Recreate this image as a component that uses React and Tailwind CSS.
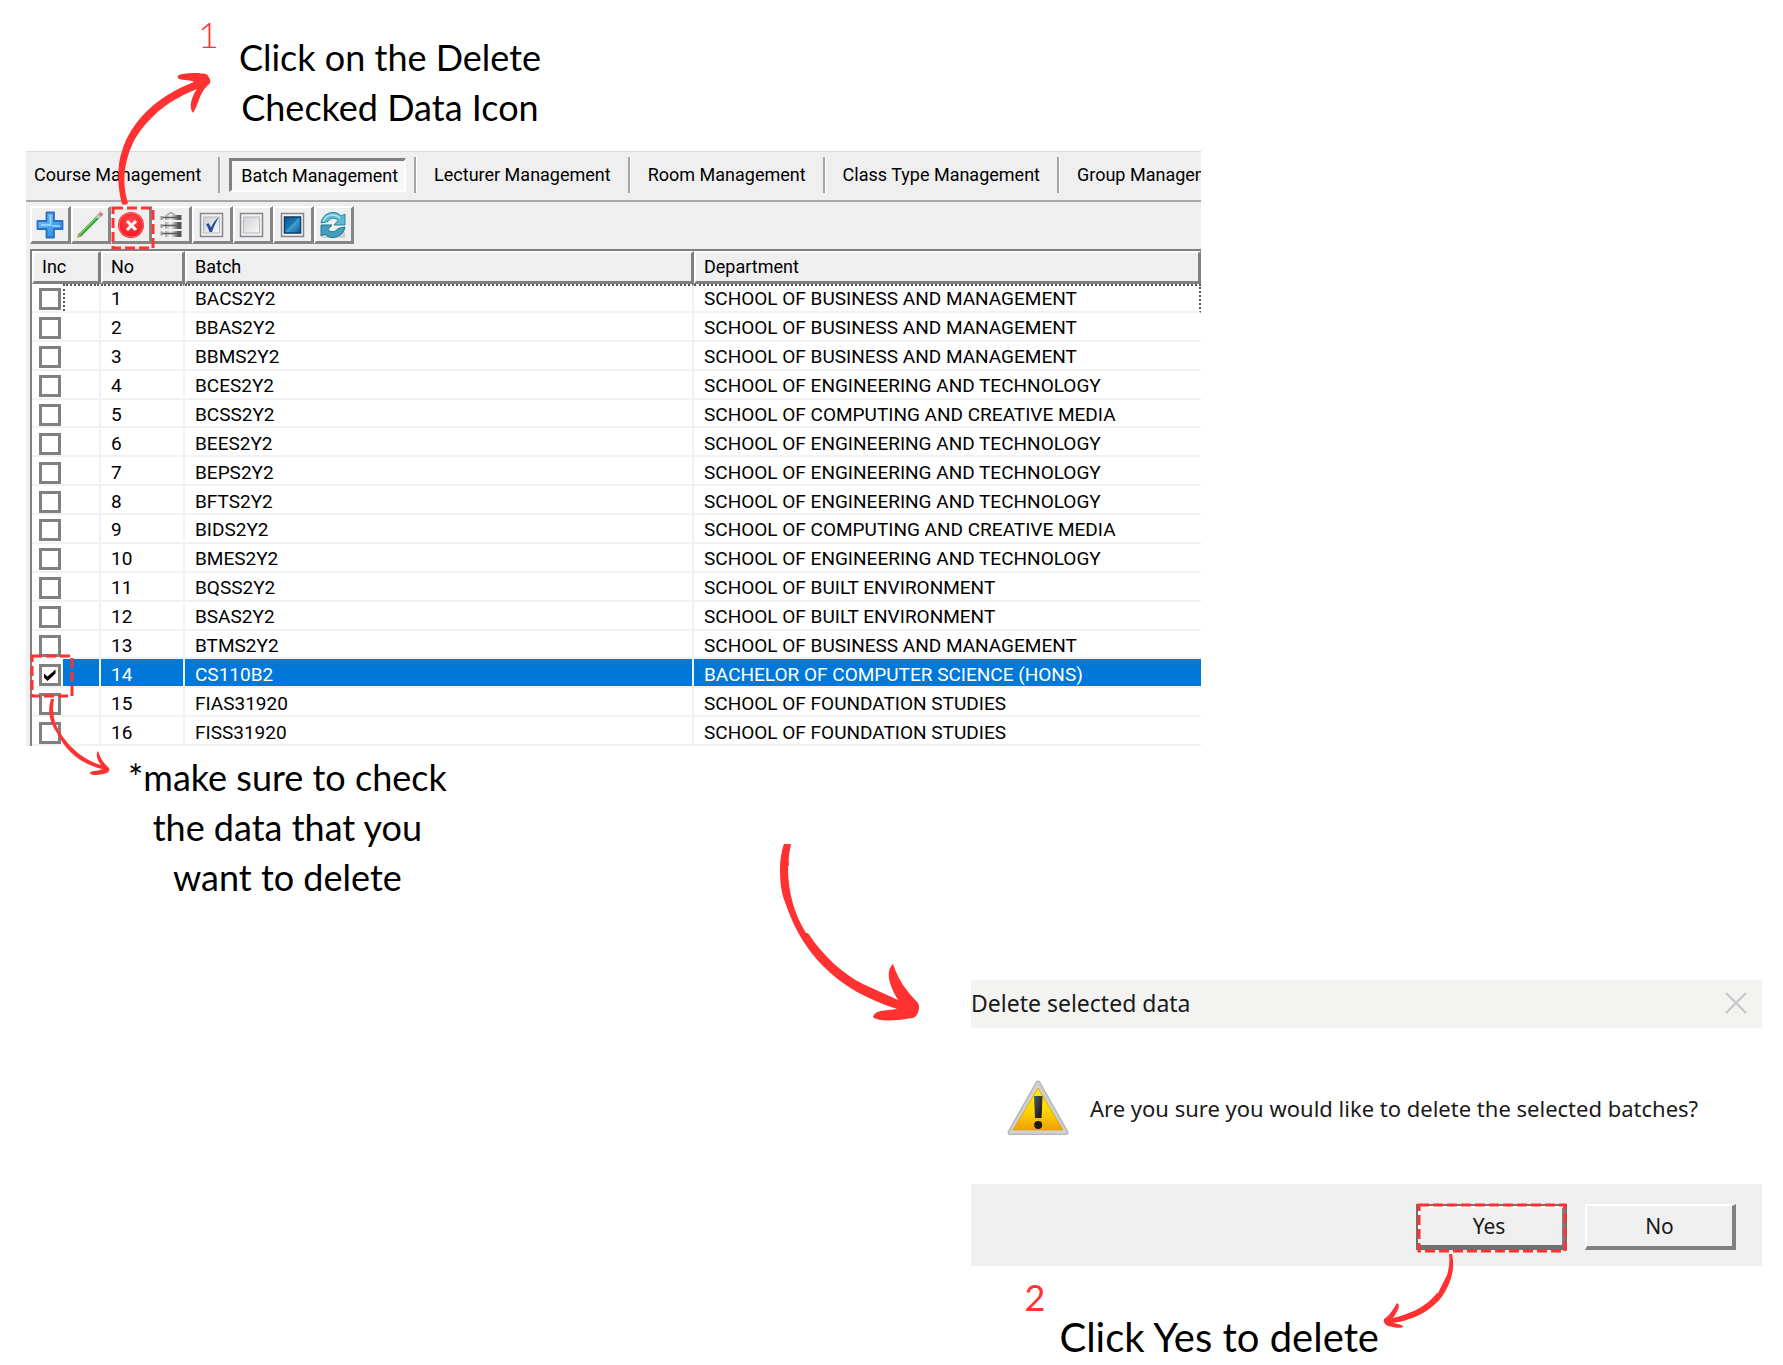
import React, { useState } from 'react';

const BUSINESS = 'SCHOOL OF BUSINESS AND MANAGEMENT';
const ENGINEERING = 'SCHOOL OF ENGINEERING AND TECHNOLOGY';
const COMPUTING = 'SCHOOL OF COMPUTING AND CREATIVE MEDIA';
const BUILT = 'SCHOOL OF BUILT ENVIRONMENT';
const FOUNDATION = 'SCHOOL OF FOUNDATION STUDIES';

const batches = [
    { no: 1, batch: 'BACS2Y2', department: BUSINESS },
    { no: 2, batch: 'BBAS2Y2', department: BUSINESS },
    { no: 3, batch: 'BBMS2Y2', department: BUSINESS },
    { no: 4, batch: 'BCES2Y2', department: ENGINEERING },
    { no: 5, batch: 'BCSS2Y2', department: COMPUTING },
    { no: 6, batch: 'BEES2Y2', department: ENGINEERING },
    { no: 7, batch: 'BEPS2Y2', department: ENGINEERING },
    { no: 8, batch: 'BFTS2Y2', department: ENGINEERING },
    { no: 9, batch: 'BIDS2Y2', department: COMPUTING },
    { no: 10, batch: 'BMES2Y2', department: ENGINEERING },
    { no: 11, batch: 'BQSS2Y2', department: BUILT },
    { no: 12, batch: 'BSAS2Y2', department: BUILT },
    { no: 13, batch: 'BTMS2Y2', department: BUSINESS },
    { no: 14, batch: 'CS110B2', department: 'BACHELOR OF COMPUTER SCIENCE (HONS)' },
    { no: 15, batch: 'FIAS31920', department: FOUNDATION },
    { no: 16, batch: 'FISS31920', department: FOUNDATION },
];

const tabs = [
    'Course Management',
    'Batch Management',
    'Lecturer Management',
    'Room Management',
    'Class Type Management',
    'Group Management',
];

const AddIcon = () => (
    <svg viewBox="0 0 28 28" className="h-7 w-7">
        <defs>
            <linearGradient id="add" x1="0" y1="0" x2="1" y2="1">
                <stop offset="0" stopColor="#7cc4fb" />
                <stop offset="1" stopColor="#1f86ea" />
            </linearGradient>
        </defs>
        <path d="M10.500 1.500h7.500v8.500h8.500v8h-8.500v8.500h-7.500v-8.500h-9v-8h9z" fill="url(#add)" stroke="#2a6fc0" strokeWidth="1.800" strokeLinejoin="round" />
        <path d="M14.500 4v10H5M16 15h8" stroke="#a9dcff" strokeWidth="1.500" fill="none" />
    </svg>
);

const EditIcon = () => (
    <svg viewBox="0 0 28 28" className="h-7 w-7">
        <path d="M3.500 24.500 23 5" stroke="#2f9a35" strokeWidth="3.500" />
        <path d="M3.500 23.500 22 5" stroke="#7fd877" strokeWidth="1.500" />
        <path d="M22.500 5.500 26 2" stroke="#c9878c" strokeWidth="4" />
        <path d="M21.500 7 23.500 4.500" stroke="#c8c8c8" strokeWidth="3.500" />
        <path d="M1 27 2.500 22.500 5.500 25.500z" fill="#b99a4a" />
    </svg>
);

const DeleteIcon = () => (
    <svg viewBox="0 0 28 28" className="h-7 w-7">
        <defs>
            <radialGradient id="del" cx=".5" cy=".35" r=".7">
                <stop offset="0" stopColor="#ff4a4a" />
                <stop offset="1" stopColor="#f0101c" />
            </radialGradient>
        </defs>
        <circle cx="14" cy="14" r="13" fill="url(#del)" />
        <circle cx="14" cy="14" r="12" fill="none" stroke="#ff6a6a" strokeWidth="1" />
        <path d="M10 10l9 9M19 10l-9 9" stroke="#fff" strokeWidth="3" />
    </svg>
);

const ServerIcon = () => (
    <svg viewBox="0 0 28 28" className="h-7 w-7">
        <defs>
            <linearGradient id="srv" x1="0" y1="0" x2="1" y2="0">
                <stop offset="0" stopColor="#a8a8a8" />
                <stop offset=".4" stopColor="#f4f4f4" />
                <stop offset="1" stopColor="#4c4c4c" />
            </linearGradient>
        </defs>
        <rect x="8" y="4" width="14" height="5" fill="url(#srv)" />
        <rect x="8" y="11" width="14" height="7" fill="url(#srv)" />
        <rect x="8" y="20" width="14" height="6" fill="url(#srv)" />
        <path d="M10 4 14 1.500 18 4" stroke="#aaa" fill="none" strokeWidth="1.500" />
        <path d="M4 6.500h19M4 14.500h19M4 22.500h19" stroke="#5c5c5c" strokeWidth="1.500" />
        <path d="M4.500 5v4M4.500 13v4M4.500 20.500v4" stroke="#999" strokeWidth="2" />
        <path d="M23 4v5M23 11v7M23 20v6" stroke="#555" strokeWidth="3" />
    </svg>
);

// the three check box icons share the same frame
const BoxIcon = ({ children }) => (
    <svg viewBox="0 0 28 28" className="h-7 w-7">
        <defs>
            <linearGradient id="box" x1="0" y1="0" x2="1" y2="1">
                <stop offset="0" stopColor="#cfd0d3" />
                <stop offset="1" stopColor="#fafafa" />
            </linearGradient>
            <linearGradient id="fill" x1="0" y1="0" x2="1" y2="1">
                <stop offset="0" stopColor="#1b4f8a" />
                <stop offset=".45" stopColor="#1878b4" />
                <stop offset=".5" stopColor="#3fa0d0" />
                <stop offset="1" stopColor="#0f5c9c" />
            </linearGradient>
        </defs>
        <rect x="2.500" y="2.500" width="22" height="23" fill="#f2f2f2" stroke="#85878c" strokeWidth="1.500" />
        <rect x="5.500" y="6" width="16" height="16" fill="url(#box)" stroke="#b5b7bb" strokeWidth="1" />
        {children}
    </svg>
);

const RefreshIcon = () => (
    <svg viewBox="0 0 28 28" className="h-7 w-7">
        <rect x="3" y="21" width="23" height="6" fill="#cfcfcf" />
        <path d="M2 12C3 5 9 1 15 1.500c3 .2 5.500 1.500 7 3.500l4-2v11H15l4-4.500c-3-3.500-8-2.500-10 1z" fill="#5fb8cf" stroke="#2b86a0" strokeWidth="1" />
        <path d="M26 16c-1 7-7 10.500-13 10.500-3 0-5.500-1.500-7-3.500l-4 2V14h11l-4 4.500c3 3.500 8 2.500 10-1z" fill="#3f9fbd" stroke="#23758f" strokeWidth="1" />
        <path d="M4.500 10.500C6 6 10 3.500 14.500 4c3 .3 5 1.500 6.500 3" stroke="#b4e4ee" strokeWidth="1.500" fill="none" />
    </svg>
);

const WarningIcon = () => (
    <svg viewBox="0 0 64 58" className="h-[58px] w-16 shrink-0">
        <defs>
            <linearGradient id="warn" x1="0" y1="0" x2="0" y2="1">
                <stop offset="0" stopColor="#fff200" />
                <stop offset=".55" stopColor="#ffd400" />
                <stop offset="1" stopColor="#f0a000" />
            </linearGradient>
            <linearGradient id="bang" x1="0" y1="0" x2="1" y2="1">
                <stop offset="0" stopColor="#555a66" />
                <stop offset="1" stopColor="#0c0c10" />
            </linearGradient>
        </defs>
        <path d="M32 4 60 53.500H4z" fill="#c4c4c4" stroke="#b4b4b4" strokeWidth="5" strokeLinejoin="round" />
        <path d="M32 4 60 53.500H4z" fill="#d9d9d9" stroke="#cfcfcf" strokeWidth="2.500" strokeLinejoin="round" />
        <path d="M32 9 57 51H7z" fill="url(#warn)" stroke="#d9a520" strokeWidth="1" />
        <path d="M28 17h8.500l-1 22h-6.500z" fill="url(#bang)" />
        <circle cx="32.200" cy="46" r="4" fill="#1a1a1e" />
    </svg>
);

const toolbar = [
    { label: 'Add', icon: <AddIcon /> },
    { label: 'Edit', icon: <EditIcon /> },
    { label: 'Delete checked data', icon: <DeleteIcon />, marked: true },
    { label: 'Data source', icon: <ServerIcon /> },
    {
        label: 'Check all',
        icon: (
            <BoxIcon>
                <path d="M8 13.500 10.500 12 13 16.500C15 12 17.500 8.500 21 6c-3 4.500-5 9-7 15h-2.500C10.500 18 9.500 15.500 8 13.500z" fill="#234f9e" />
            </BoxIcon>
        ),
    },
    { label: 'Uncheck all', icon: <BoxIcon /> },
    {
        label: 'Invert selection',
        icon: (
            <BoxIcon>
                <rect x="5.500" y="6" width="16" height="16" fill="url(#fill)" stroke="#123f70" strokeWidth="1.500" />
            </BoxIcon>
        ),
    },
    { label: 'Refresh', icon: <RefreshIcon /> },
];

const DashedBox = ({ className }) => (
    <svg className={`pointer-events-none absolute z-10 overflow-visible ${className}`}>
        <rect width="100%" height="100%" fill="none" stroke="#ff3131" strokeWidth="3" strokeDasharray="10 4" />
    </svg>
);

const Arrow = ({ className, viewBox, d }) => (
    <svg viewBox={viewBox} className={`pointer-events-none absolute z-20 ${className}`}>
        <path d={d} fill="#ff3131" />
    </svg>
);

const Tabs = () => (
    <nav className="flex h-[51px] items-center overflow-hidden border-t border-b-2 border-t-[#dcdcdc] border-b-[#a8a8a8] pb-[2px] pl-2 text-lg">
        {tabs.map((tab, i) => (
            <React.Fragment key={tab}>
                {i > 0 && <span className="h-9 w-[3px] shrink-0 border-r border-l-2 border-r-white border-l-[#a5a5a5]" />}
                {tab === 'Batch Management' ? (
                    <button className="mx-2 h-[34px] shrink-0 border-t-[3px] border-r-2 border-b-2 border-l-[3px] border-t-[#808080] border-r-white border-b-white border-l-[#808080] bg-[#f7f7f7] pr-[6px] pl-[9px] whitespace-nowrap">
                        {tab}
                    </button>
                ) : (
                    <button className={`shrink-0 whitespace-nowrap ${i === 0 ? 'pr-[17px]' : 'px-[17px]'}`}>{tab}</button>
                )}
            </React.Fragment>
        ))}
    </nav>
);

const Toolbar = () => (
    <div className="flex w-[328px] pt-1 pb-[5px] pl-1">
        {toolbar.map((item) => (
            <button
                key={item.label}
                aria-label={item.label}
                className="relative flex h-[38px] flex-1 items-center justify-center border-t-2 border-r-[3px] border-b-[3px] border-l-2 border-t-white border-r-[#858585] border-b-[#858585] border-l-white"
            >
                {item.icon}
                {item.marked && <DashedBox className="top-0 left-0 h-10 w-10" />}
            </button>
        ))}
    </div>
);

const BatchRow = ({ row, checked, onToggle }) => {
    const focused = row.no === 1;
    const selected = row.no === 14;
    const focus = focused ? 'border-t-2 border-t-[#555] [border-top-style:dotted] pt-[2px]' : 'pt-1';
    const cell = `h-7 border-b-2 border-[#f2f2f2] pl-[10px] ${focus}`;
    return (
        <tr className={selected ? 'text-white' : ''}>
            <td className="h-7 border-r-2 border-b-2 border-[#f2f2f2] p-0">
                <div className="relative flex h-full items-center pl-[7px]">
                    <input
                        type="checkbox"
                        id={`batch-${row.no}`}
                        aria-label={`Include ${row.batch}`}
                        checked={checked}
                        onChange={onToggle}
                        className="mt-1 h-[22px] w-[22px] shrink-0 appearance-none border-[3px] border-[#808080] bg-white"
                    />
                    {checked && (
                        <svg viewBox="0 0 14 14" className="pointer-events-none absolute left-[11px] mt-1 h-[14px] w-[14px]">
                            <path d="M1 5.500 4.500 8.500 12.500 1.500v4L4.500 13 1 9.500z" fill="#000" />
                        </svg>
                    )}
                    <span
                        className={`ml-[2px] h-full flex-1 ${focused ? 'border-t-2 border-l-2 border-dotted border-[#555]' : ''} ${selected ? 'bg-[#0078d7]' : ''}`}
                    />
                    {selected && <DashedBox className="-top-[3px] left-0 h-10 w-10" />}
                </div>
            </td>
            <td className={`${cell} border-r-2 ${selected ? 'bg-[#0078d7]' : ''}`}>{row.no}</td>
            <td className={`${cell} border-r-2 ${selected ? 'bg-[#0078d7]' : ''}`}>{row.batch}</td>
            <td className={`${cell} ${focused ? 'border-r-2 border-r-[#555] [border-right-style:dotted]' : ''} ${selected ? 'bg-[#0078d7]' : ''}`}>
                {row.department}
            </td>
        </tr>
    );
};

const BatchTable = () => {
    const [checked, setChecked] = useState([14]);
    const toggle = (no) => setChecked(checked.includes(no) ? checked.filter((n) => n !== no) : [...checked, no]);
    const head =
        'h-[33px] border-t-2 border-r-[3px] border-b-[3px] border-l-2 border-t-white border-r-[#808080] border-b-[#808080] border-l-white bg-[#efefef] p-0 pl-2 text-left text-lg leading-6 font-normal';
    return (
        <div className="ml-1 border-t-2 border-l-2 border-[#808080] bg-white">
            <table className="h-[495px] w-full table-fixed border-separate border-spacing-0 text-[19px] leading-[22px]">
                <thead>
                    <tr>
                        <th className={`${head} w-[69px]`}>Inc</th>
                        <th className={`${head} w-[84px]`}>No</th>
                        <th className={`${head} w-[509px]`}>Batch</th>
                        <th className={head}>Department</th>
                    </tr>
                </thead>
                <tbody>
                    {batches.map((row) => (
                        <BatchRow key={row.no} row={row} checked={checked.includes(row.no)} onToggle={() => toggle(row.no)} />
                    ))}
                </tbody>
            </table>
        </div>
    );
};

const DeleteDialog = () => (
    <div role="dialog" aria-labelledby="dialog-title" className="w-full max-w-[791px] font-['Noto_Sans',sans-serif] text-[#1a1a1a]">
        <div className="flex h-12 items-center justify-between bg-[#f3f3f2] pr-[15px] pb-[2px]">
            <h2 id="dialog-title" className="text-[23px]">Delete selected data</h2>
            <button aria-label="Close">
                <svg viewBox="0 0 22 22" className="h-[22px] w-[22px]">
                    <path d="M1 1l20 20M21 1 1 21" stroke="#c4c4c4" strokeWidth="2" />
                </svg>
            </button>
        </div>
        <div className="flex h-[156px] items-center gap-5 pt-1 pl-[35px]">
            <WarningIcon />
            <p className="text-[22px]">Are you sure you would like to delete the selected batches?</p>
        </div>
        <div className="flex h-[82px] items-center justify-end gap-[18px] bg-[#efefef] pt-1 pr-[26px] text-[21px]">
            <button className="relative h-[46px] w-[151px] border-2 border-[#707070] bg-[#efefef]">
                <span className="flex h-full items-center justify-center border-t-2 border-r-[3px] border-b-[3px] border-l-2 border-t-white border-r-[#808080] border-b-[#707070] border-l-white pr-1">
                    Yes
                </span>
                <DashedBox className="-top-[1px] left-[1px] h-[46px] w-[146px]" />
            </button>
            <button className="h-[46px] w-[151px] border-t-2 border-r-4 border-b-4 border-l-2 border-t-white border-r-[#808080] border-b-[#808080] border-l-white pt-[2px]">
                No
            </button>
        </div>
    </div>
);

const App = () => (
    <main className="min-h-screen overflow-hidden bg-white font-[Roboto,sans-serif] text-black">
        <section className="relative pl-[26px]">
            <div className="flex h-[151px] items-start pl-[172px] font-[Lato,sans-serif] text-4xl">
                <span className="pt-[14px] leading-10 font-light text-[#ff3131]">1</span>
                <p className="ml-5 pt-8 text-center leading-[50px]">
                    Click on the Delete
                    <br />
                    Checked Data Icon
                </p>
            </div>
            <div className="w-full max-w-[1175px] bg-[#efefef]">
                <Tabs />
                <Toolbar />
                <BatchTable />
            </div>
            <Arrow
                className="top-[70px] left-[110px] h-[140px] w-[105px]"
                viewBox="110 70 105 140"
                d="M122 204C117 186 117 165 122 151 131 122 155 97 194 82 188 79 181 81 178 78 175 73 192 73 198 73 203 74 207 73 208 76 212 81 210 84 208 85 199 93 199 104 193 113 188 107 192 96 197 89 172 99 151 113 135 139 125 158 121 180 128 203 126 205 124 205 122 204z"
            />
            <Arrow
                className="top-[695px] left-[45px] h-[85px] w-[70px]"
                viewBox="45 695 70 85"
                d="M51 699C47 712 50 722 57 733 67 753 82 764 102 769 97 772 91 770 90 773 91 777 104 774 107 773 109 772 110 770 109 768 103 763 100 757 98 751 95 755 98 761 101 765 80 759 64 742 56 725 52 714 53 706 54 699z"
            />
        </section>

        <p className="mt-[6px] ml-[128px] w-fit text-center font-[Lato,sans-serif] text-4xl leading-[50px]">
            *make sure to check
            <br />
            the data that you
            <br />
            want to delete
        </p>

        <section className="relative mt-[78px] flex justify-end pr-[21px]">
            <DeleteDialog />
            {/* hangs off the left edge of the dialog */}
            <Arrow
                className="-top-[141px] right-[858px] h-[185px] w-[150px]"
                viewBox="775 840 150 185"
                d="M784 845C779 858 778 885 785 903 794 930 807 951 823 967 844 988 867 1000 897 1010 888 1012 875 1010 873 1018 880 1024 900 1021 913 1019 917 1018 921 1009 918 1004 905 990 899 982 893 965 885 972 889 986 898 1001L863 985C843 975 823 957 808 934L806 934C795 916 788 895 788 868L789 866C788 858 790 851 791 845z"
            />
            <Arrow
                className="top-[271px] right-[323px] h-[80px] w-[80px]"
                viewBox="1380 1252 80 80"
                d="M1449 1255C1450 1262 1449 1270 1447 1276L1438 1294 1437 1294C1425 1309 1409 1315 1393 1319 1398 1312 1401 1306 1397 1304 1393 1311 1389 1317 1384 1320 1383 1323 1385 1326 1388 1327 1393 1328 1400 1330 1403 1328 1404 1326 1398 1325 1393 1324 1415 1321 1437 1309 1446 1291 1452 1280 1455 1268 1452 1255z"
            />
        </section>

        <div className="flex justify-end pr-[404px] font-[Lato,sans-serif]">
            <span className="text-4xl leading-[62px] text-[#ff3131]">2</span>
            <p className="mt-[46px] ml-[14px] text-[40px] leading-[50px]">Click Yes to delete</p>
        </div>
    </main>
);

export default App;
